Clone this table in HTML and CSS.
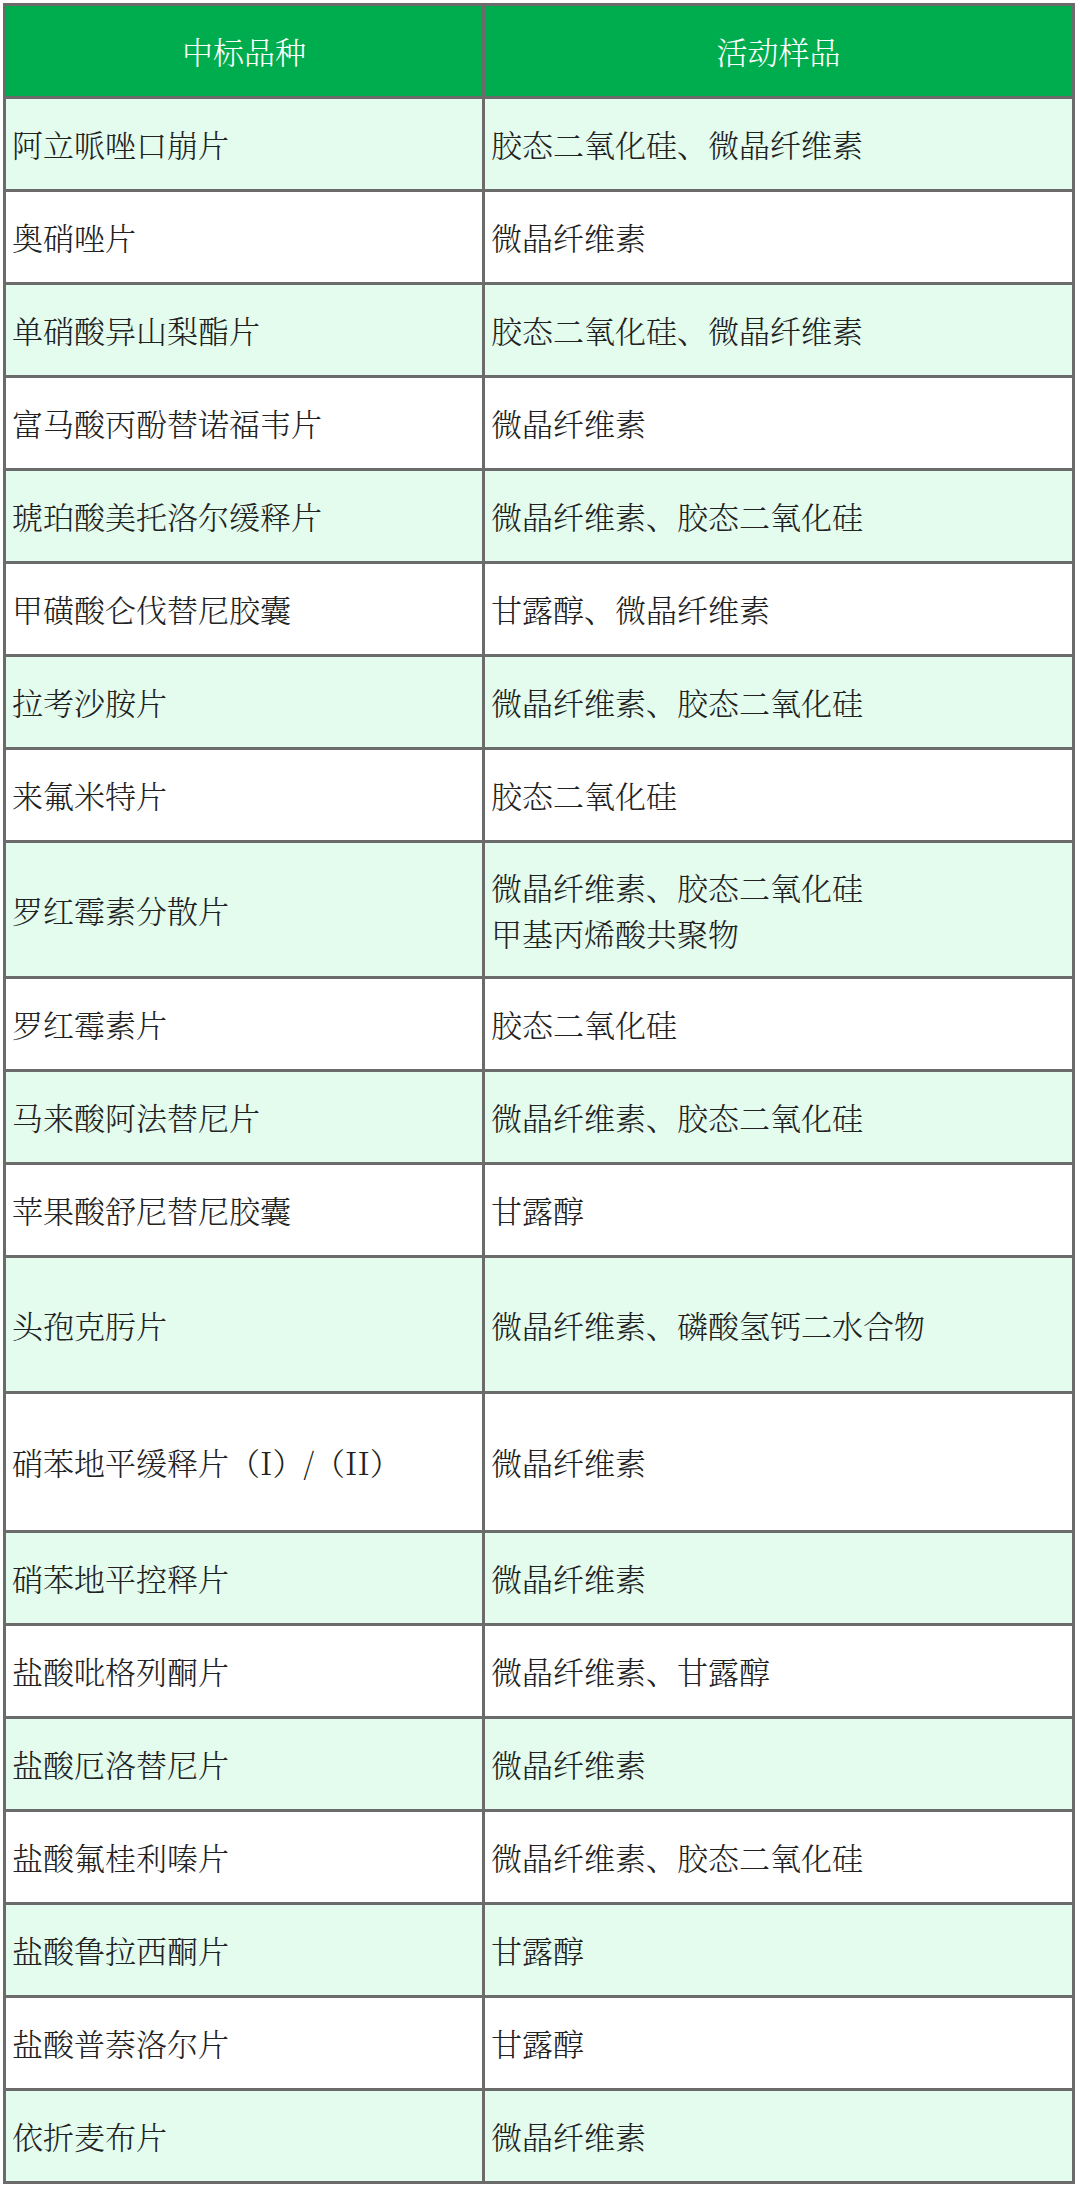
FILE: index.html
```html
<!DOCTYPE html>
<html lang="zh-CN">
<head>
<meta charset="utf-8">
<title>中标品种与活动样品</title>
<link rel="stylesheet" href="styles.css">
</head>
<body>
<table class="tbl">
  <colgroup><col class="c1"><col class="c2"></colgroup>
  <thead>
    <tr class="head"><th>中标品种</th><th>活动样品</th></tr>
  </thead>
  <tbody>
    <tr class="g"><td>阿立哌唑口崩片</td><td>胶态二氧化硅、微晶纤维素</td></tr>
    <tr class="w"><td>奥硝唑片</td><td>微晶纤维素</td></tr>
    <tr class="g"><td>单硝酸异山梨酯片</td><td>胶态二氧化硅、微晶纤维素</td></tr>
    <tr class="w"><td>富马酸丙酚替诺福韦片</td><td>微晶纤维素</td></tr>
    <tr class="g"><td>琥珀酸美托洛尔缓释片</td><td>微晶纤维素、胶态二氧化硅</td></tr>
    <tr class="w"><td>甲磺酸仑伐替尼胶囊</td><td>甘露醇、微晶纤维素</td></tr>
    <tr class="g"><td>拉考沙胺片</td><td>微晶纤维素、胶态二氧化硅</td></tr>
    <tr class="w"><td>来氟米特片</td><td>胶态二氧化硅</td></tr>
    <tr class="g tall"><td>罗红霉素分散片</td><td class="two"><div>微晶纤维素、胶态二氧化硅</div><div>甲基丙烯酸共聚物</div></td></tr>
    <tr class="w"><td>罗红霉素片</td><td>胶态二氧化硅</td></tr>
    <tr class="g"><td>马来酸阿法替尼片</td><td>微晶纤维素、胶态二氧化硅</td></tr>
    <tr class="w"><td>苹果酸舒尼替尼胶囊</td><td>甘露醇</td></tr>
    <tr class="g tall"><td>头孢克肟片</td><td>微晶纤维素、磷酸氢钙二水合物</td></tr>
    <tr class="w taller"><td>硝苯地平缓释片（I）/（II）</td><td>微晶纤维素</td></tr>
    <tr class="g"><td>硝苯地平控释片</td><td>微晶纤维素</td></tr>
    <tr class="w"><td>盐酸吡格列酮片</td><td>微晶纤维素、甘露醇</td></tr>
    <tr class="g"><td>盐酸厄洛替尼片</td><td>微晶纤维素</td></tr>
    <tr class="w"><td>盐酸氟桂利嗪片</td><td>微晶纤维素、胶态二氧化硅</td></tr>
    <tr class="g"><td>盐酸鲁拉西酮片</td><td>甘露醇</td></tr>
    <tr class="w"><td>盐酸普萘洛尔片</td><td>甘露醇</td></tr>
    <tr class="g"><td>依折麦布片</td><td>微晶纤维素</td></tr>
  </tbody>
</table>
</body>
</html>
```
FILE: styles.css
```css
html, body {
  margin: 0;
  padding: 0;
  background: #ffffff;
}
body {
  padding: 3px 0 0 3px;
  font-family: "Noto Serif CJK SC", "Liberation Serif", "Noto Sans CJK SC", serif;
  font-size: 31px;
  font-weight: 300;
  color: #222222;
}
.tbl {
  border-collapse: collapse;
  width: 1072px;
  table-layout: fixed;
}
.c1 { width: 479px; }
.tbl th,
.tbl td {
  border: 3px solid #6b6b6b;
  padding: 0 6px;
  vertical-align: middle;
  line-height: 40px;
}
.tbl th {
  background: #00ad4e;
  color: #ffffff;
  font-weight: 300;
  text-align: center;
  height: 90px;
}
.tbl td {
  text-align: left;
  height: 90px;
}
.two div + div {
  margin-top: 6px;
}
.g td { background: #e3fcee; }
.w td { background: #ffffff; }
.tall td { height: 133px; }
.taller td { height: 136px; }
```
